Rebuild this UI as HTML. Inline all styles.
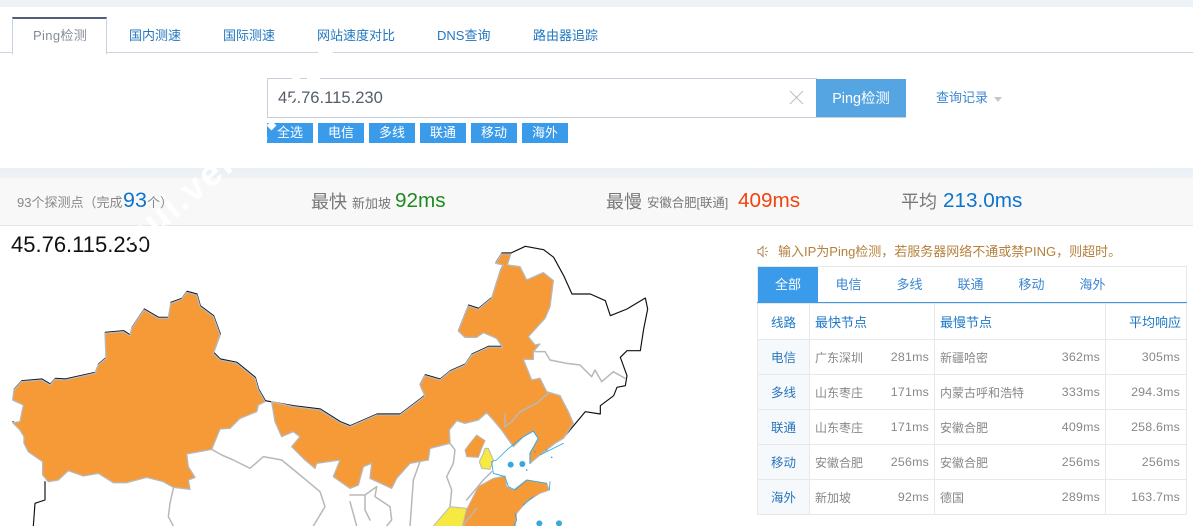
<!DOCTYPE html>
<html lang="zh"><head><meta charset="utf-8"><title>Ping检测</title>
<style>
html,body{margin:0;padding:0;background:#fff}
body{width:1193px;height:526px;overflow:hidden;position:relative;font-family:"Liberation Sans","Noto Sans CJK SC",sans-serif;font-size:13px;color:#666}
.a{position:absolute;white-space:nowrap}
.tab{position:absolute;top:28px;height:16px;line-height:16px;color:#2277c0;font-size:13px;white-space:nowrap}
.tag{position:absolute;top:123px;width:46px;height:20px;line-height:20px;background:#3a9bea;color:#fff;text-align:center;font-size:13px}
.t2{position:absolute;top:267px;width:61px;height:36px;line-height:36px;text-align:center;color:#3c87d0;font-size:13px}
table{position:absolute;left:757px;top:303px;width:430px;border-collapse:collapse;table-layout:fixed;font-size:12px;color:#888}
td,th{border:1px solid #e8e8e8;padding:0 5px;height:34px;font-weight:normal;overflow:hidden;white-space:nowrap}
th{color:#1c78c8;font-size:13px;text-align:left;height:35px}
td.l,th.l{text-align:center;padding:0;font-size:12.5px}
td.l{background:#f5f9fc;color:#2a75bb;padding-bottom:2px;height:32px}
.r{float:right;font-size:12.4px;letter-spacing:.2px;position:relative;top:1px}
td.rr{font-size:12.4px;letter-spacing:.2px;padding-right:6px}
.rr{text-align:right}
</style></head><body>
<div class="a" style="left:0;top:0;width:1193px;height:7px;background:#edf2f7"></div>
<div class="a" style="left:0;top:52px;width:1193px;height:1px;background:#ccd3e0"></div>
<div class="a" style="left:12px;top:17px;width:93px;height:35px;background:#fff;border:1px solid #ccd3e0;border-top:2px solid #4f5f7c;border-bottom:1px solid #fff"></div>
<div class="tab" style="left:33px;color:#858c98;letter-spacing:.35px">Ping检测</div>
<div class="tab" style="left:129px">国内测速</div>
<div class="tab" style="left:223px">国际测速</div>
<div class="tab" style="left:317px">网站速度对比</div>
<div class="tab" style="left:437px">DNS查询</div>
<div class="tab" style="left:533px">路由器追踪</div>

<div class="a" style="left:267px;top:78px;width:548px;height:38px;border:1px solid #c8d0de;background:#fff"></div>
<div class="a" style="left:278px;top:88px;font-size:16.6px;line-height:20px;color:#555d6b">45.76.115.230</div>
<svg class="a" style="left:788px;top:90px" width="16" height="15"><path d="M2 1L15 14M15 1L2 14" stroke="#bdbdbd" stroke-width="1" fill="none"/></svg>
<div class="a" style="left:816px;top:79px;width:90px;height:38px;line-height:41px;background:#55a5e3;border-bottom:1px solid #c8d0de;color:#fff;text-align:center;font-size:14.4px">Ping检测</div>
<div class="a" style="left:936px;top:90px;line-height:16px;color:#3c87d0;font-size:13px">查询记录</div>
<div class="a" style="left:994px;top:97px;width:0;height:0;border-left:4px solid transparent;border-right:4px solid transparent;border-top:5px solid #c8c8c8"></div>

<div class="tag" style="left:267px">全选</div>
<div class="tag" style="left:318px">电信</div>
<div class="tag" style="left:369px">多线</div>
<div class="tag" style="left:420px">联通</div>
<div class="tag" style="left:471px">移动</div>
<div class="tag" style="left:522px">海外</div>

<div class="a" style="left:0;top:168px;width:1193px;height:10px;background:linear-gradient(#eaf0f6,#eef2f6)"></div>
<div class="a" style="left:0;top:178px;width:1193px;height:47px;background:#f8f8f8;border-bottom:1px solid #e4e4e4"></div>
<div class="a" style="left:17px;top:194px;line-height:17px;color:#888;font-size:13px">93个探测点（完成</div>
<div class="a" style="left:123px;top:187px;line-height:26px;color:#0e74cc;font-size:21.5px">93</div>
<div class="a" style="left:311px;top:190px;line-height:24px;font-size:18px;color:#777">最快</div>
<div class="a" style="left:352px;top:195px;line-height:17px;font-size:13px;color:#777">新加坡</div>
<div class="a" style="left:395px;top:188px;line-height:26px;font-size:20.7px;color:#1f8a1f">92ms</div>
<div class="a" style="left:606px;top:190px;line-height:24px;font-size:18px;color:#777">最慢</div>
<div class="a" style="left:647px;top:195px;line-height:17px;font-size:12.4px;color:#777">安徽合肥[联通]</div>
<div class="a" style="left:738px;top:188px;line-height:26px;font-size:20.7px;color:#f0430f">409ms</div>
<div class="a" style="left:901px;top:190px;line-height:24px;font-size:18px;color:#777">平均</div>
<div class="a" style="left:943px;top:188px;line-height:26px;font-size:20.7px;color:#0e74cc">213.0ms</div>

<div class="a" style="left:11px;top:232px;line-height:26px;font-size:22px;color:#111">45.76.115.230</div>

<svg class="a" style="left:0;top:230px" width="750" height="296" viewBox="0 0 2250 888">
<g stroke-linejoin="round" stroke-linecap="round">
<path fill="none" stroke="#111" stroke-width="3.5" transform="translate(1,-3)" d="M128 735L128 695L85 665L72 640L72 620L60 600L38 578M38 510L42 480L65 455L125 450L150 465L165 448L195 450L285 430L295 405L318 385L315 310L370 305L390 318L395 295L432 240L475 265L505 265L512 220L545 208L560 187L590 195L600 230L640 260L660 315L640 370L660 390L710 400L765 445L775 480L795 515L880 530L960 540L1020 578L1050 590L1130 555L1200 555L1275 498L1260 465L1275 437L1320 450L1350 425L1395 405L1415 375L1465 352L1508 352M1375 303L1405 228L1435 238L1475 205L1500 125L1510 105L1487 100L1505 72L1532 72L1575 52L1630 62L1660 85L1690 140L1715 195L1770 195L1815 215L1830 260L1880 240L1935 207L1942 240L1930 300L1920 365L1880 365L1860 385L1880 440L1875 470L1850 475L1840 500L1800 530L1800 555L1755 548L1720 590L1690 625"/>
<path fill="none" stroke="#111" stroke-width="3.5" d="M135 755L135 810L105 820L100 888"/>
<path fill="#f69a38" stroke="#b8b8b8" stroke-width="4" d="M38 510L42 480L65 455L125 450L150 465L165 448L195 450L285 430L295 405L318 385L315 310L370 305L390 318L395 295L432 240L475 265L505 265L512 220L545 208L560 187L590 195L600 230L640 260L660 315L640 370L660 390L710 400L765 445L775 480L795 515L775 525L770 545L720 565L690 595L660 597L635 658L560 672L565 710L585 742L565 750L570 778L520 772L490 755L440 742L380 758L340 758L295 730L250 738L205 722L175 750L145 755L128 735L128 695L85 665L72 640L72 620L60 600L38 578L60 575L70 525Z"/>
<path fill="#f69a38" stroke="#b8b8b8" stroke-width="4" d="M815 515L880 530L960 540L1020 578L1050 590L1130 555L1200 555L1275 498L1260 465L1275 437L1320 450L1350 425L1395 405L1415 375L1465 352L1508 352L1490 325L1450 308L1430 322L1395 322L1375 303L1405 228L1435 238L1475 205L1500 125L1510 105L1487 100L1505 72L1532 72L1522 105L1560 110L1580 150L1630 128L1660 152L1650 230L1635 265L1585 320L1605 345L1620 342L1600 365L1600 388L1570 388L1595 450L1620 445L1640 485L1680 497L1705 545L1720 580L1690 625L1665 640L1620 675L1590 700L1590 670L1615 625L1600 603L1570 620L1540 650L1505 600L1480 570L1460 548L1435 570L1395 580L1370 572L1348 600L1350 640L1290 655L1285 690L1230 700L1190 745L1175 775L1110 745L1115 700L1090 710L1075 765L1050 775L1000 740L1020 690L950 700L945 715L915 690L875 650L900 620L880 605L845 620L825 575Z"/>
<path fill="#f69a38" stroke="#b8b8b8" stroke-width="3" d="M1430 615L1455 632L1445 655L1435 682L1400 680L1395 660L1410 640Z"/>
<path fill="#f6ea42" stroke="#b8b8b8" stroke-width="3" d="M1455 655L1465 655L1480 690L1470 718L1445 715L1438 695L1450 670Z"/>
<path fill="#f69a38" stroke="#b8b8b8" stroke-width="3" d="M1402 835L1435 770L1480 745L1515 738L1520 770L1540 780L1580 750L1640 760L1648 780L1620 790L1580 815L1550 850L1545 900L1380 900Z"/>
<path fill="#f6ea42" stroke="#b8b8b8" stroke-width="3" d="M1290 900L1350 830L1400 835L1385 900Z"/>
<path fill="none" stroke="#b8b8b8" stroke-width="4.5" d="M1605 365L1635 365L1650 390L1700 400L1740 405L1775 440L1785 420L1805 455L1840 425L1875 445M1515 550L1515 590L1535 575L1560 545L1610 520L1645 490M635 658L665 675L700 690L750 715L790 680L845 690L900 735L960 785L975 830L940 888M520 775L510 820L505 860L520 888M1350 640L1365 660L1360 700L1340 740L1355 780L1350 830M1260 695L1240 750L1235 820L1230 888M1050 795L1095 795L1130 770L1125 800L1170 830L1175 870L1160 888M1050 815L1070 888M1475 725L1450 750L1400 810M1095 795L1095 840L1110 870M1387 890L1430 835"/>
<path fill="none" stroke="#2ba6e2" stroke-width="2.5" d="M1475 695L1480 730L1515 740L1525 770L1545 780L1580 750L1640 760M1650 755L1648 780M1475 695L1490 690L1520 660L1570 620L1600 603L1615 625L1590 670L1590 700M1620 675L1690 640M1545 850L1550 870L1540 890M1600 800L1570 825"/>
<g fill="#35a8e0"><circle cx="1532" cy="704" r="9"/><circle cx="1567" cy="702" r="9"/><circle cx="1618" cy="880" r="9"/><circle cx="1677" cy="880" r="9"/><circle cx="1605" cy="665" r="2.5"/><circle cx="1640" cy="660" r="2.5"/><circle cx="1655" cy="682" r="2.5"/><circle cx="1580" cy="720" r="2.5"/></g>
</g>
</svg>

<svg class="a" style="left:757px;top:245px" width="12" height="13" viewBox="0 0 12 13"><path d="M1 4.5H3L6 1.5V11.5L3 8.5H1ZM8 4L10 2.5M8.5 6.5H11M8 9L10 10.5" stroke="#b08a5a" stroke-width="1" fill="none"/></svg>
<div class="a" style="left:778px;top:243px;line-height:17px;font-size:13px;color:#b5813c">输入IP为Ping检测，若服务器网络不通或禁PING，则超时。</div>

<div class="a" style="left:757px;top:266px;width:428px;height:36px;border:1px solid #e8e8e8;border-bottom:0"></div>
<div class="t2" style="left:758px;width:60px;background:#3a9bea;color:#fff">全部</div>
<div class="t2" style="left:818px">电信</div>
<div class="t2" style="left:879px">多线</div>
<div class="t2" style="left:940px">联通</div>
<div class="t2" style="left:1001px">移动</div>
<div class="t2" style="left:1062px">海外</div>
<div class="a" style="left:757px;top:302px;width:430px;height:1px;background:#3a9bea"></div>
<table>
<colgroup><col style="width:52px"><col style="width:125px"><col style="width:171px"><col style="width:81px"></colgroup>
<tr><th class="l">线路</th><th>最快节点</th><th>最慢节点</th><th class="rr">平均响应</th></tr>
<tr><td class="l">电信</td><td>广东深圳<span class="r">281ms</span></td><td>新疆哈密<span class="r">362ms</span></td><td class="rr">305ms</td></tr>
<tr><td class="l">多线</td><td>山东枣庄<span class="r">171ms</span></td><td>内蒙古呼和浩特<span class="r">333ms</span></td><td class="rr">294.3ms</td></tr>
<tr><td class="l">联通</td><td>山东枣庄<span class="r">171ms</span></td><td>安徽合肥<span class="r">409ms</span></td><td class="rr">258.6ms</td></tr>
<tr><td class="l">移动</td><td>安徽合肥<span class="r">256ms</span></td><td>安徽合肥<span class="r">256ms</span></td><td class="rr">256ms</td></tr>
<tr><td class="l">海外</td><td>新加坡<span class="r">92ms</span></td><td>德国<span class="r">289ms</span></td><td class="rr">163.7ms</td></tr>
</table>

<div class="a" style="left:130px;top:223px;font-size:36px;font-weight:bold;color:#fff;transform:rotate(-40deg);transform-origin:0 50%;line-height:36px;letter-spacing:2px">nui.verce</div>
<div class="a" style="left:147px;top:194px;line-height:17px;color:#888;font-size:13px">个）</div>
<div class="a" style="left:318px;top:52px;width:15px;height:1px;background:#fff"></div>
<div class="a" style="left:292px;top:78px;width:8px;height:1px;background:#fff"></div>
<div class="a" style="left:307px;top:78px;width:13px;height:1px;background:#fff"></div>
<div class="a" style="left:291px;top:90px;width:4px;height:16px;background:#fff;transform:rotate(38deg)"></div>
<div class="a" style="left:268px;top:122px;width:7px;height:7px;background:#fff;transform:rotate(45deg)"></div>
</body></html>
